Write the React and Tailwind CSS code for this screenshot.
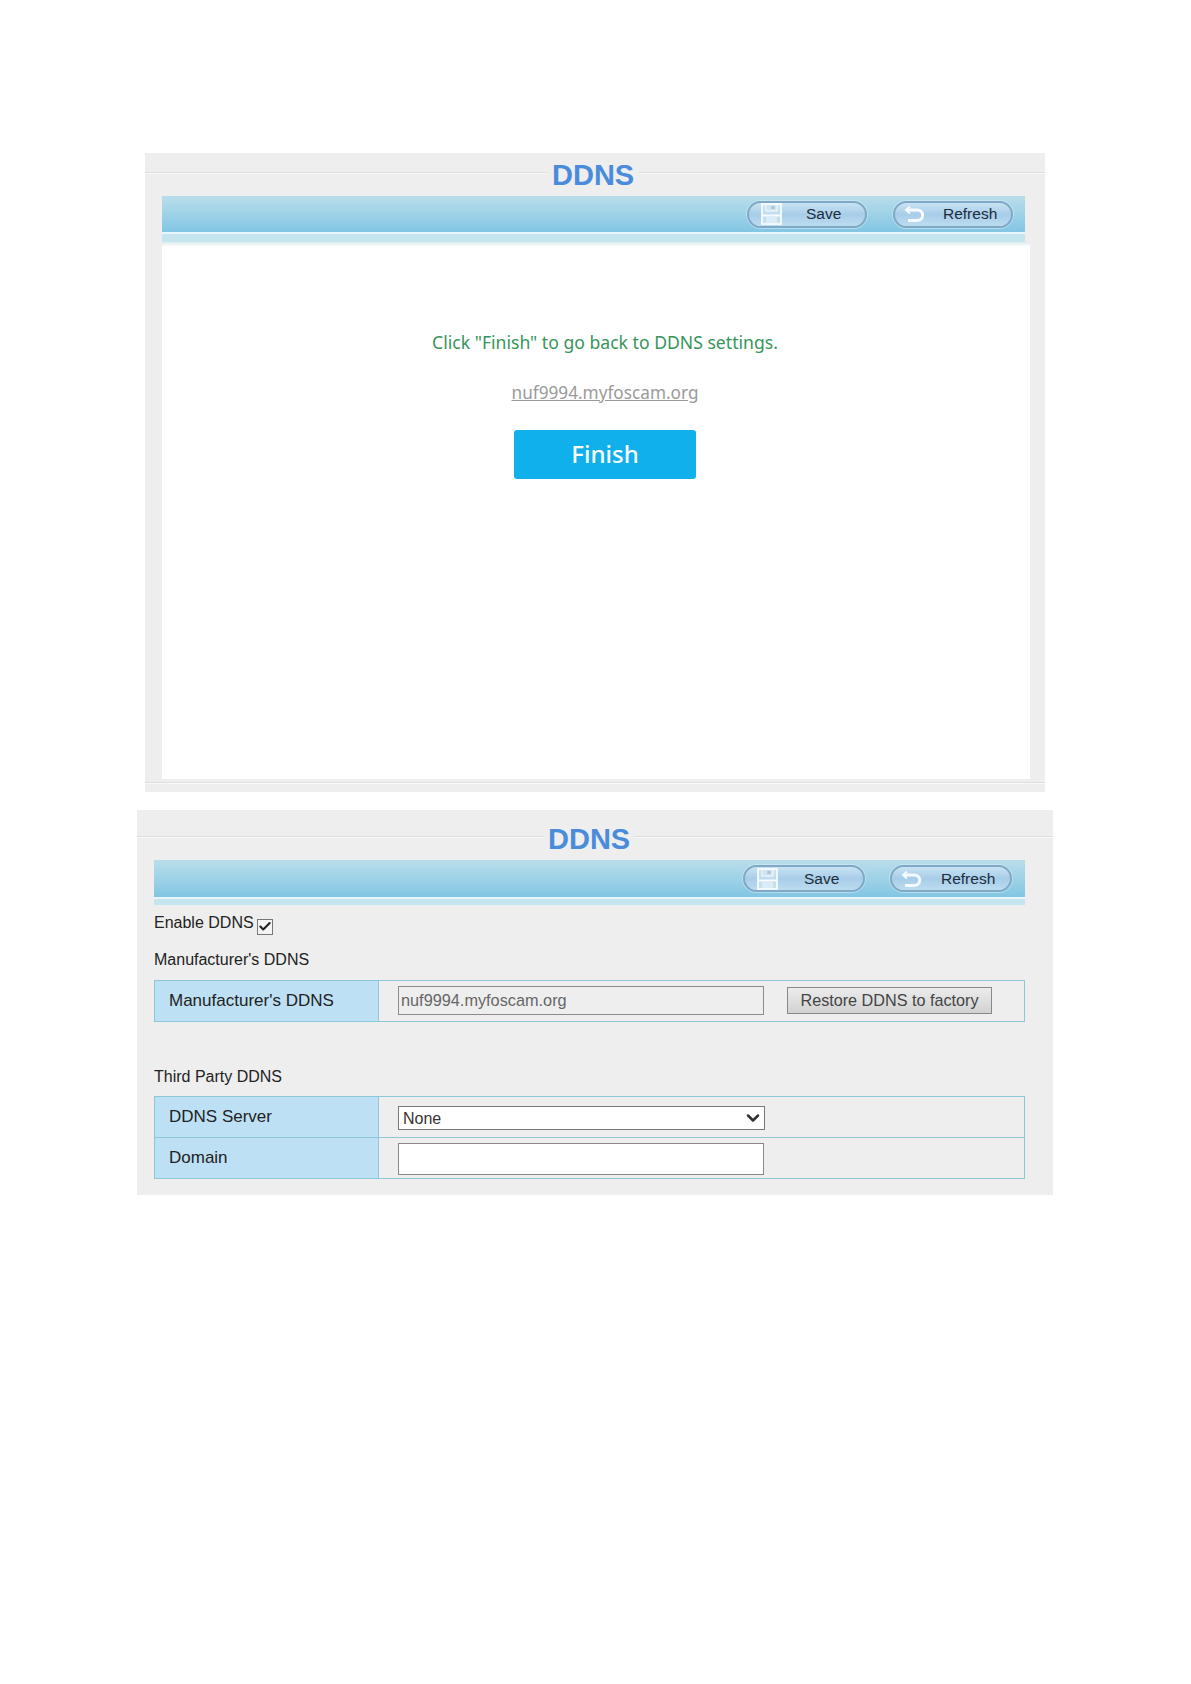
import React from "react";
import { Check, ChevronDown } from "lucide-react";

function SaveIcon() {
  return (
    <svg width="21" height="22" viewBox="0 0 21 22" fill="none">
      <rect x="1" y="1" width="19" height="20" fill="#dcedf7" fillOpacity="0.45" stroke="#f6fbfe" strokeWidth="1.8" />
      <rect x="5" y="1.5" width="11" height="6.5" fill="#cfe3f1" stroke="#f6fbfe" />
      <rect x="10.5" y="3" width="3" height="3" fill="#a8c2d6" />
      <path d="M1.5 12.5 H19.5" stroke="#f6fbfe" strokeWidth="2" />
      <rect x="5" y="13.5" width="11" height="6.5" fill="#e8f3fa" fillOpacity="0.6" />
    </svg>
  );
}

function RefreshIcon() {
  return (
    <svg width="23" height="18" viewBox="0 0 23 18" fill="none">
      <path d="M4 5 H14 C21.5 5 21.5 15.5 14 15.5 H5" stroke="#f4fafd" strokeWidth="3" />
      <path d="M7 1.5 L3 5 L7 8.5" stroke="#f4fafd" strokeWidth="2" />
    </svg>
  );
}

function PillButton({ children, label, labelClass, widthClass }) {
  return (
    <button className={`flex h-[27px] items-center rounded-full border-2 border-[#7fa9c6] bg-linear-to-b from-[#c9e3f2] via-[#a8cde9] to-[#bcdcef] text-[15.5px] leading-none text-[#1d2c3a] shadow-[0_0_0_1px_rgba(220,240,250,0.5)] ${widthClass}`}>
      {children}
      <span className={labelClass}>{label}</span>
    </button>
  );
}

function PanelHeader({ heightClass, lineClass, titleClass, leftClass }) {
  return (
    <div className={`flex items-start ${heightClass}`}>
      <div className={`h-[2px] border-t border-b border-t-[#dedede] border-b-[#f8f8f8] ${lineClass} ${leftClass}`} />
      <h2 className={`px-1 text-[29px] leading-[36px] font-bold text-[#4a8cdb] ${titleClass}`}>DDNS</h2>
      <div className={`h-[2px] flex-1 border-t border-b border-t-[#dedede] border-b-[#f8f8f8] ${lineClass}`} />
    </div>
  );
}

function Toolbar({ widthClass, heightClass, paddingClass, gapClass, bandClass, buttonClass, saveLabel, refreshLabel }) {
  return (
    <div className={`ml-[17px] ${widthClass}`}>
      <div className={`flex items-center justify-end bg-linear-to-b from-[#b9deea] to-[#82c6e3] ${heightClass} ${paddingClass} ${gapClass}`}>
        <PillButton label="Save" labelClass={saveLabel} widthClass={buttonClass}>
          <span className="ml-[12px] flex"><SaveIcon /></span>
        </PillButton>
        <PillButton label="Refresh" labelClass={refreshLabel} widthClass={buttonClass}>
          <span className="ml-[8px] flex"><RefreshIcon /></span>
        </PillButton>
      </div>
      <div className="h-[2px] bg-[#e6f6fb]" />
      <div className={`bg-[#c6e6ef] ${bandClass}`} />
    </div>
  );
}

function Row({ label, border, heightClass, children }) {
  return (
    <div className={`flex ${heightClass} ${border ? "border-b border-[#8cc8d6]" : ""}`}>
      <div className="flex w-[224px] items-center border-r border-[#8cc8d6] bg-[#bde0f5] pb-[1px] pl-[14px] text-[17px] text-[#222]">
        {label}
      </div>
      <div className="flex flex-1 items-center pl-[19px]">{children}</div>
    </div>
  );
}

export default function App() {
  return (
    <div className="h-[1684px] bg-white pt-[153px] font-['Liberation_Sans',sans-serif]">
      <section className="ml-[145px] w-[900px] bg-[#eeeeee]">
        <PanelHeader heightClass="h-[43px]" lineClass="mt-[19px]" titleClass="mt-[4px]" leftClass="w-[403px]" />
        <Toolbar
          widthClass="w-[863px]"
          heightClass="h-[36px]"
          paddingClass="pr-[12px]"
          gapClass="gap-[26px]"
          bandClass="h-[8px]"
          buttonClass="w-[120px]"
          saveLabel="ml-[24px]"
          refreshLabel="ml-[17px]"
        />
        <div className="ml-[17px] h-[5px] w-[868px] bg-linear-to-b from-[#dcecf0] to-white" />
        <div className="ml-[17px] flex h-[532px] w-[868px] flex-col items-center bg-white pl-[18px] font-['Noto_Sans',sans-serif]">
          <p className="mt-[83px] text-[17.6px] leading-[24px] text-[#35955a]">Click "Finish" to go back to DDNS settings.</p>
          <a className="mt-[27px] text-[17.2px] leading-[24px] text-[#9a9a9a] underline">nuf9994.myfoscam.org</a>
          <button className="mt-[25px] h-[49px] w-[182px] rounded-[3px] bg-[#0fb0ec] pb-[2px] text-[24px] font-medium text-white">Finish</button>
        </div>
        <div className="mt-[3px] h-[2px] border-t border-b border-t-[#dedede] border-b-[#f8f8f8]" />
        <div className="h-[8px]" />
      </section>

      <section className="mt-[18px] ml-[137px] w-[916px] bg-[#eeeeee]">
        <PanelHeader heightClass="h-[50px]" lineClass="mt-[26px]" titleClass="mt-[11px]" leftClass="w-[407px]" />
        <Toolbar
          widthClass="w-[871px]"
          heightClass="h-[37px]"
          paddingClass="pr-[13px]"
          gapClass="gap-[25px]"
          bandClass="h-[6px]"
          buttonClass="w-[122px]"
          saveLabel="ml-[26px]"
          refreshLabel="ml-[18px]"
        />

        <div className="ml-[17px] w-[871px] pb-[16px] text-[16px] text-[#222]">
          <div className="mt-[6px] flex h-[24px] items-center">
            <span>Enable DDNS</span>
            <span className="mt-[7px] ml-[3px] flex size-[16px] items-center justify-center border border-[#777] bg-[#f4f4f4]">
              <Check size={15} strokeWidth={3.6} color="#222" />
            </span>
          </div>
          <div className="mt-[13px] h-[24px] leading-[24px]">Manufacturer's DDNS</div>

          <div className="mt-[8px] border border-[#8cc8d6]">
            <Row label="Manufacturer's DDNS" heightClass="h-[40px]">
              <input
                readOnly
                value="nuf9994.myfoscam.org"
                className="mb-[1px] h-[29px] w-[366px] border border-[#8f8a8a] bg-[#eeeeee] pl-[2px] text-[16.3px] text-[#666] outline-none"
              />
              <button className="mb-[2px] ml-[23px] h-[27px] w-[205px] border border-[#888] bg-linear-to-b from-[#ececec] to-[#d2d2d2] text-[16.2px] text-[#444]">
                Restore DDNS to factory
              </button>
            </Row>
          </div>

          <div className="mt-[43px] h-[24px] leading-[24px]">Third Party DDNS</div>

          <div className="mt-[7px] border border-[#8cc8d6]">
            <Row label="DDNS Server" border heightClass="h-[41px]">
              <div className="relative mt-[2px]">
                <select defaultValue="None" className="block h-[24px] w-[367px] appearance-none border border-[#777] bg-white pl-[4px] text-[#333] outline-none">
                  <option>None</option>
                </select>
                <ChevronDown size={20} strokeWidth={3} color="#333" className="pointer-events-none absolute top-[2px] right-[2px]" />
              </div>
            </Row>
            <Row label="Domain" heightClass="h-[40px]">
              <input readOnly className="mt-[1px] h-[32px] w-[366px] border border-[#8a868a] bg-white outline-none" />
            </Row>
          </div>
        </div>
      </section>
    </div>
  );
}
